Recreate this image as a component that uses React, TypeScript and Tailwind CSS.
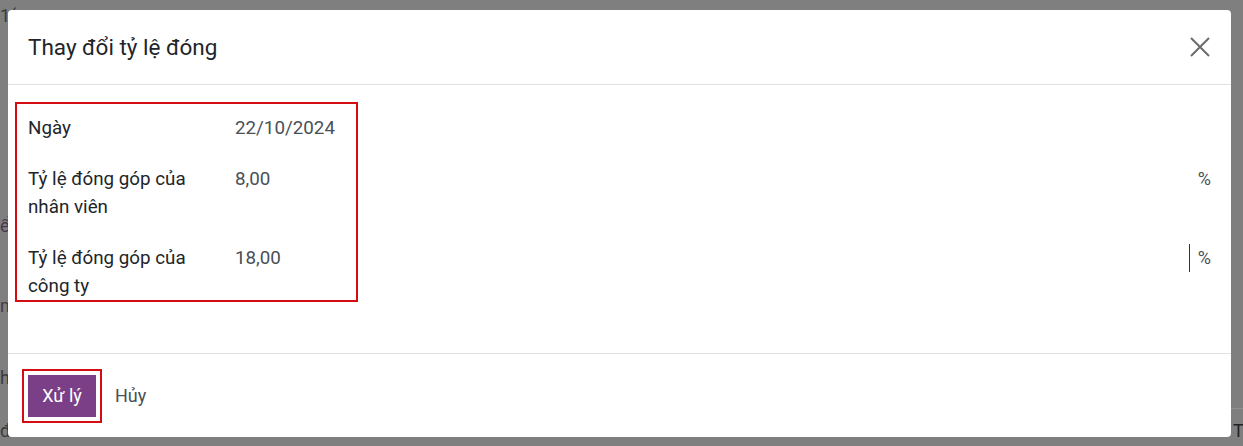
import React from "react";

export default function App() {
  return (
    <div
      className="relative w-[1243px] h-[446px] overflow-hidden bg-[#7f7f7f]"
      style={{ fontFamily: "Roboto, 'Noto Sans', sans-serif" }}
    >
      {/* faint background content behind the modal */}
      <span className="absolute left-0 top-[2px] text-[18px] text-[#3a3a3a]">1(</span>
      <span className="absolute left-0 top-[212px] text-[18px] text-[#4a3a4a]">ển</span>
      <span className="absolute left-0 top-[292px] text-[18px] text-[#4a3a4a]">m</span>
      <span className="absolute left-0 top-[364px] text-[18px] text-[#3a3a3a]">h</span>
      <span className="absolute left-0 top-[417px] text-[18px] text-[#3a3a3a]">đ</span>
      <span className="absolute left-[1233px] top-[417px] text-[18px] text-[#222]">T</span>
      <div className="absolute left-[1231px] top-[408px] w-[12px] h-px bg-[#909090]" />

      <div className="absolute left-[8px] top-[10px] w-[1223px] h-[427px] bg-white rounded-[4px] flex flex-col">
        {/* header */}
        <div className="h-[75px] flex items-center justify-between pl-[20px] pr-[20px] border-b border-[#dee2e6] shrink-0">
          <div className="text-[22.5px] text-[#212529] leading-none">Thay đổi tỷ lệ đóng</div>
          <svg width="22" height="22" viewBox="0 0 22 22">
            <path d="M2 2 L20 20 M20 2 L2 20" stroke="#6b6b6b" strokeWidth="2" fill="none" />
          </svg>
        </div>

        {/* body */}
        <div className="relative flex-1 px-[20px] pt-[29px] text-[18.8px] leading-[28px]">
          <div className="flex flex-col gap-[23px]">
            <div className="flex">
              <div className="w-[207px] text-[#212529]">Ngày</div>
              <div className="flex-1 text-[#495057]">22/10/2024</div>
            </div>
            <div className="flex">
              <div className="w-[207px] text-[#212529]">
                Tỷ lệ đóng góp của
                <br />
                nhân viên
              </div>
              <div className="flex-1 text-[#495057]">8,00</div>
              <div className="w-[21px] text-right text-[#495057] text-[18px]">%</div>
            </div>
            <div className="flex">
              <div className="w-[207px] text-[#212529]">
                Tỷ lệ đóng góp của
                <br />
                công ty
              </div>
              <div className="flex-1 text-[#495057] flex">
                <span className="flex-1">18,00</span>
                <span className="w-px h-[28px] bg-[#333]" />
              </div>
              <div className="w-[21px] text-right text-[#495057] text-[18px]">%</div>
            </div>
          </div>
          {/* annotation box */}
          <div className="absolute left-[7px] top-[17px] w-[343px] h-[200px] border-2 border-[#d40d12] pointer-events-none" />
        </div>

        {/* footer */}
        <div className="h-[84px] shrink-0 border-t border-[#dee2e6] flex items-center pl-[20px] gap-[19px]">
          <div className="relative">
            <button className="h-[42px] w-[68px] bg-[#7a3f86] text-white text-[18px] flex items-center justify-center">
              Xử lý
            </button>
            <div className="absolute left-[-6px] top-[-6px] w-[80px] h-[54px] border-2 border-[#d40d12] pointer-events-none" />
          </div>
          <span className="text-[18px] text-[#495057]">Hủy</span>
        </div>
      </div>
    </div>
  );
}
